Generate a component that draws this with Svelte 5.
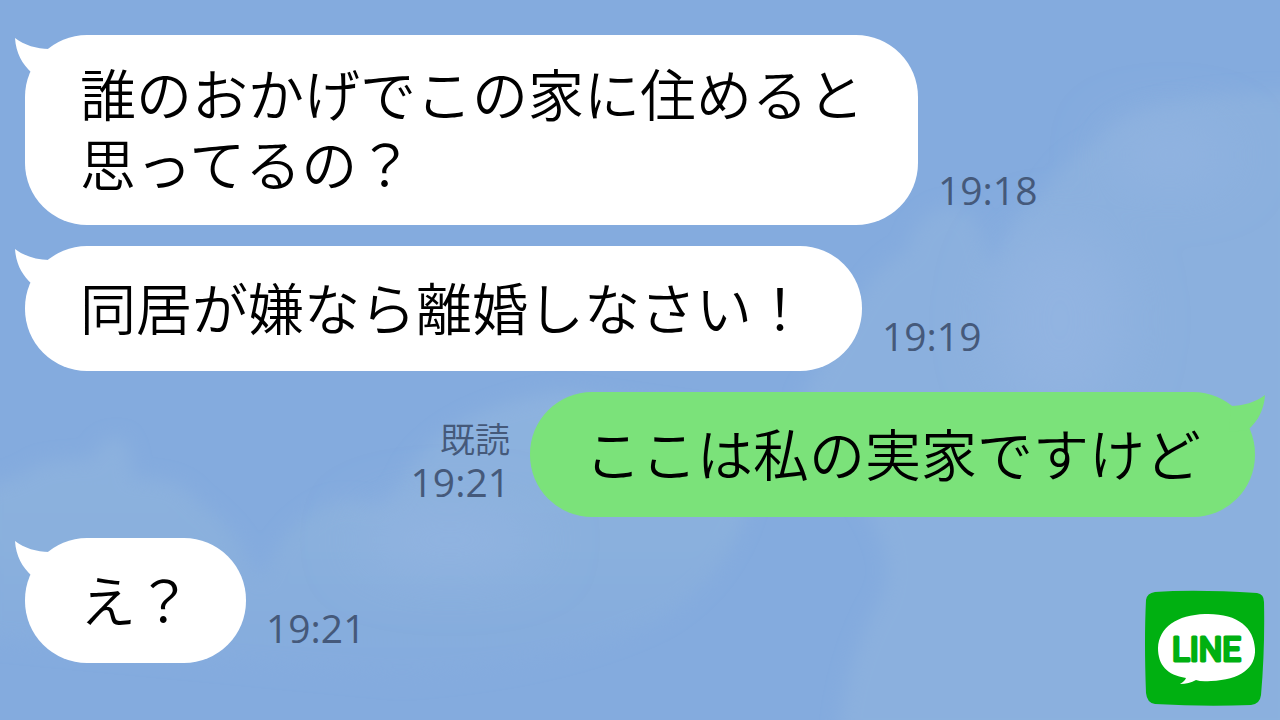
<script>
  const messages = [
    { id: 1, mine: false, lines: ['誰のおかげでこの家に住めると', '思ってるの？'], time: '19:18' },
    { id: 2, mine: false, lines: ['同居が嫌なら離婚しなさい！'], time: '19:19' },
    { id: 3, mine: true, lines: ['ここは私の実家ですけど'], time: '19:21', read: '既読' },
    { id: 4, mine: false, lines: ['え？'], time: '19:21' }
  ];
</script>

<main class="chat">
  <svg class="sky" viewBox="0 0 1280 720" preserveAspectRatio="xMidYMid slice" aria-hidden="true">
    <defs>
      <filter id="soft" x="-20%" y="-20%" width="140%" height="140%"><feGaussianBlur stdDeviation="9" /></filter>
      <filter id="haze" x="-100%" y="-100%" width="300%" height="300%"><feGaussianBlur stdDeviation="28" /></filter>
      <linearGradient id="fade" x1="0" y1="0" x2="0" y2="1">
        <stop offset="0" stop-color="#8db2df" />
        <stop offset="0.5" stop-color="#8ab0dd" />
        <stop offset="1" stop-color="#84abde" />
      </linearGradient>
    </defs>
    <path filter="url(#soft)" fill="#8bb0de" d="M1300 92 Q1200 92 1150 108 Q1108 120 1098 142 Q1060 160 1042 196 Q1012 215 1000 258 L988 262 Q980 205 950 206 Q915 212 908 250 Q880 262 858 300 L800 400 L860 500 Q900 560 880 600 Q845 660 838 740 L1300 740 Z" />
    <path filter="url(#soft)" fill="url(#fade)" d="M-20 488 Q20 478 40 464 Q65 458 92 460 Q102 435 122 438 Q134 452 132 478 Q180 476 196 500 Q235 528 250 562 L262 580 Q280 530 320 508 Q345 494 370 506 Q395 505 408 470 Q450 408 560 392 L760 420 Q760 560 660 620 Q560 670 400 680 L-20 640 Z" />
    <g filter="url(#haze)" fill="#92b4e1">
      <ellipse cx="1170" cy="155" rx="60" ry="28" />
      <ellipse cx="1060" cy="320" rx="65" ry="90" />
      <ellipse cx="450" cy="540" rx="90" ry="30" />
    </g>
  </svg>

  <ol class="messages">
    {#each messages as message (message.id)}
      <li class="message" class:mine={message.mine}>
        <div class="bubble">
          <svg class="tail" viewBox="0 0 40 44" aria-hidden="true">
            <path d="M2 3 C11 10 24 14 36 14 L38 40 L19 38 C9 29 3 18 2 3 Z" />
          </svg>
          <p>
            {#each message.lines as line}<span>{line}</span>{/each}
          </p>
        </div>
        <div class="meta">
          {#if message.read}<span class="read">{message.read}</span>{/if}
          <time>{message.time}</time>
        </div>
      </li>
    {/each}
  </ol>

  <svg class="logo" viewBox="0 0 120 118" role="img" aria-label="LINE">
    <path fill="#00b011" d="M10 2 Q50 -1 112 3 Q119 4 119 12 Q120 60 116 105 Q115 114 106 115 Q60 117 10 114 Q2 113 1 103 Q-1 50 1 10 Q2 3 10 2 Z" />
    <path fill="#fff" d="M60 24 C92 23 109 37 110 59 C111 78 95 90 66 91 Q56 92 51 90 Q44 94 35 94 Q40 91 41 88 C22 85 13 75 13 58 C14 37 32 25 60 24 Z" />
    <text x="27" y="71">LINE</text>
  </svg>
</main>

<style>
  :global(body) {
    margin: 0;
    background: #84abde;
  }

  .chat {
    position: relative;
    min-height: 100vh;
    box-sizing: border-box;
    padding: 35px 25px;
    overflow: hidden;
    background: #84abde;
    font-family: 'Noto Sans CJK JP', sans-serif;
  }

  .sky {
    position: absolute;
    inset: 0;
    width: 100%;
    height: 100%;
  }

  .messages {
    position: relative;
    display: flex;
    flex-direction: column;
    gap: 21px;
    margin: 0;
    padding: 0;
    list-style: none;
  }

  .message {
    display: flex;
    align-items: flex-end;
    gap: 20px;
    --bubble: #fff;
  }

  .mine {
    flex-direction: row-reverse;
    --bubble: #7be27a;
  }

  .bubble {
    position: relative;
    display: flex;
    align-items: center;
    box-sizing: border-box;
    min-height: 125px;
    padding: 22px 54px 28px 55px;
    border-radius: 62px;
    background: var(--bubble);
    color: #000;
    font-size: 56px;
    font-weight: 350;
    line-height: 70px;
  }

  p {
    margin: 0;
  }

  p span {
    display: block;
  }

  .tail {
    position: absolute;
    top: 0;
    left: -12px;
    width: 40px;
    height: 44px;
    fill: var(--bubble);
  }

  .mine .tail {
    right: -12px;
    left: auto;
    transform: scaleX(-1);
  }

  .meta {
    display: flex;
    flex-direction: column;
    padding-bottom: 13px;
    color: #45597a;
    font-size: 35px;
    line-height: 44px;
  }

  .mine .meta {
    align-items: flex-end;
  }

  .read {
    font-weight: 350;
  }

  time {
    font-family: 'Open Sans', sans-serif;
    font-size: 39px;
    font-weight: 500;
  }

  .logo {
    position: absolute;
    right: 15px;
    bottom: 12px;
    width: 120px;
    height: 118px;
  }

  .logo text {
    fill: #00b011;
    stroke: #00b011;
    stroke-width: 3px;
    stroke-linejoin: round;
    font-family: Roboto, sans-serif;
    font-size: 33px;
    font-weight: 400;
  }
</style>
